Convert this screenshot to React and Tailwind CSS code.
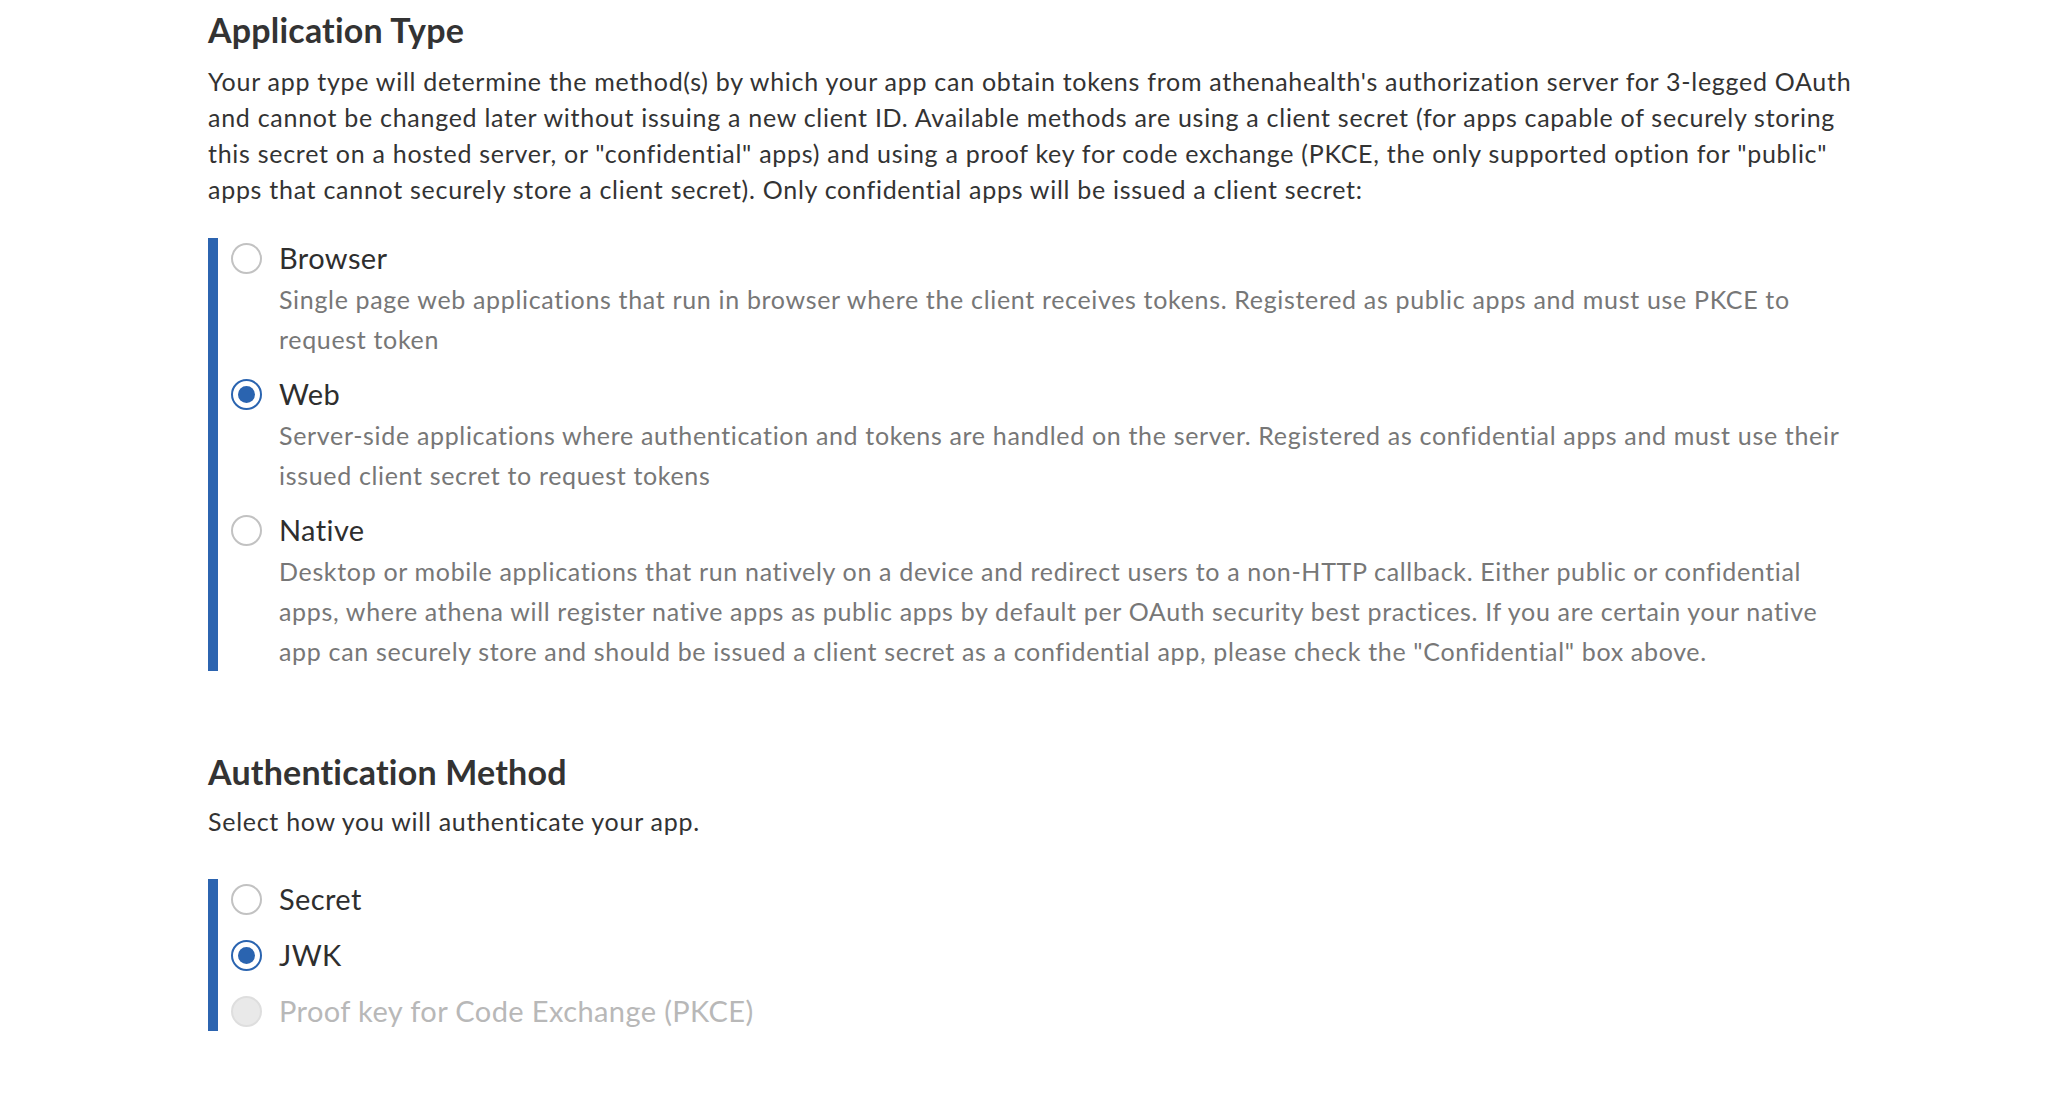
import React from "react";

const FONT = { fontFamily: "Lato, 'Open Sans', sans-serif" };

function Radio({ state }) {
  if (state === "checked") {
    return (
      <div className="mt-[3px] flex h-[31px] w-[31px] shrink-0 items-center justify-center rounded-full border-2 border-[#2a64b0] bg-white">
        <div className="h-[17px] w-[17px] rounded-full bg-[#2a64b0]" />
      </div>
    );
  }
  if (state === "disabled") {
    return <div className="mt-[3px] h-[31px] w-[31px] shrink-0 rounded-full border-2 border-[#dedede] bg-[#e9e9e9]" />;
  }
  return <div className="mt-[3px] h-[31px] w-[31px] shrink-0 rounded-full border-2 border-[#c2c2c2] bg-white" />;
}

function Option({ state, label, lines }) {
  const disabled = state === "disabled";
  return (
    <div className="flex items-start gap-[17px]">
      <Radio state={state} />
      <div className="flex flex-col">
        <div className={`text-[29px] leading-[36px] tracking-[0.4px] ${disabled ? "text-[#b8b8b8]" : "text-[#2e2e2e]"}`}>{label}</div>
        {lines && (
          <div className="mt-[3px] text-[25px] leading-[40px] tracking-[0.67px] text-[#777777]">
            {lines.map((l, i) => (
              <div key={i} className="whitespace-nowrap">{l}</div>
            ))}
          </div>
        )}
      </div>
    </div>
  );
}

export default function App() {
  const intro = [
    "Your app type will determine the method(s) by which your app can obtain tokens from athenahealth's authorization server for 3-legged OAuth",
    "and cannot be changed later without issuing a new client ID. Available methods are using a client secret (for apps capable of securely storing",
    "this secret on a hosted server, or \"confidential\" apps) and using a proof key for code exchange (PKCE, the only supported option for \"public\"",
    "apps that cannot securely store a client secret). Only confidential apps will be issued a client secret:",
  ];
  return (
    <div className="min-h-[1118px] w-full bg-white" style={FONT}>
      <div className="flex flex-col pl-[208px] pt-[8px] text-[#333333]">
        <h2 className="text-[34px] font-bold leading-[44px] tracking-[0.2px] text-[#333333]">Application Type</h2>
        <div className="mt-[11px] text-[25px] leading-[36px] tracking-[0.72px] text-[#333333]">
          {intro.map((l, i) => (
            <div key={i} className="whitespace-nowrap">{l}</div>
          ))}
        </div>

        <div className="mt-[31px] flex flex-col gap-[17px] border-l-[10px] border-[#2c64b0] pb-0 pl-[13px] pt-[2px]">
          <Option
            state="unchecked"
            label="Browser"
            lines={[
              "Single page web applications that run in browser where the client receives tokens. Registered as public apps and must use PKCE to",
              "request token",
            ]}
          />
          <Option
            state="checked"
            label="Web"
            lines={[
              "Server-side applications where authentication and tokens are handled on the server. Registered as confidential apps and must use their",
              "issued client secret to request tokens",
            ]}
          />
          <Option
            state="unchecked"
            label="Native"
            lines={[
              "Desktop or mobile applications that run natively on a device and redirect users to a non-HTTP callback. Either public or confidential",
              "apps, where athena will register native apps as public apps by default per OAuth security best practices. If you are certain your native",
              "app can securely store and should be issued a client secret as a confidential app, please check the \"Confidential\" box above.",
            ]}
          />
        </div>

        <h2 className="mt-[79px] text-[34px] font-bold leading-[44px] tracking-[0.2px] text-[#333333]">Authentication Method</h2>
        <div className="mt-[9px] text-[25px] leading-[36px] tracking-[0.72px] text-[#333333]">Select how you will authenticate your app.</div>

        <div className="mt-[40px] flex flex-col gap-[20px] border-l-[10px] border-[#2c64b0] pb-[2px] pl-[13px] pt-[2px]">
          <Option state="unchecked" label="Secret" />
          <Option state="checked" label="JWK" />
          <Option state="disabled" label="Proof key for Code Exchange (PKCE)" />
        </div>
      </div>
    </div>
  );
}
